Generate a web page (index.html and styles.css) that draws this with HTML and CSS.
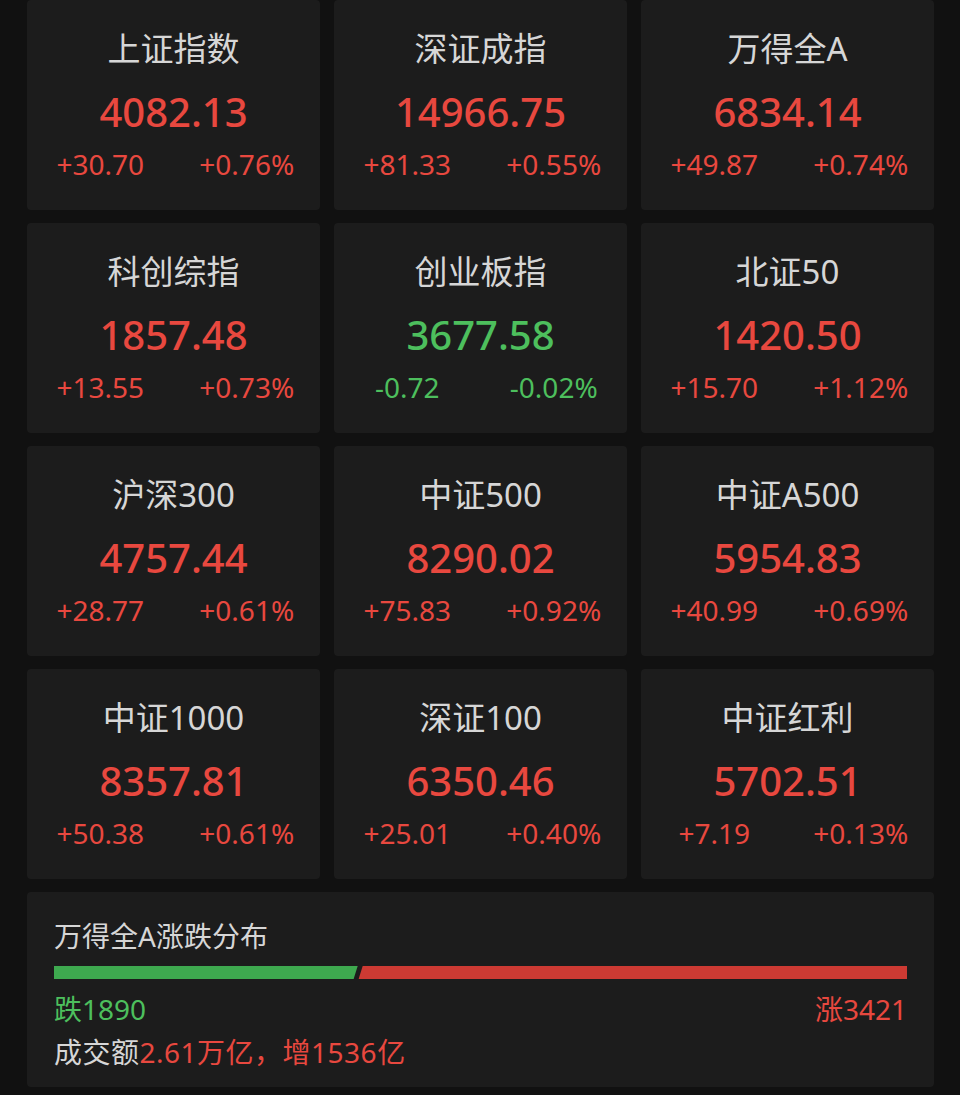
FILE: index.html
```html
<!DOCTYPE html>
<html lang="zh-CN">
<head>
  <meta charset="UTF-8">
  <title>指数行情</title>
  <link rel="stylesheet" href="styles.css">
</head>
<body>

  <div class="page">
    <div class="grid">
      <div class="card">
        <div class="name">上证指数</div>
        <div class="price up">4082.13</div>
        <div class="changes up"><span>+30.70</span><span>+0.76%</span></div>
      </div>
      <div class="card">
        <div class="name">深证成指</div>
        <div class="price up">14966.75</div>
        <div class="changes up"><span>+81.33</span><span>+0.55%</span></div>
      </div>
      <div class="card">
        <div class="name">万得全A</div>
        <div class="price up">6834.14</div>
        <div class="changes up"><span>+49.87</span><span>+0.74%</span></div>
      </div>

      <div class="card">
        <div class="name">科创综指</div>
        <div class="price up">1857.48</div>
        <div class="changes up"><span>+13.55</span><span>+0.73%</span></div>
      </div>
      <div class="card">
        <div class="name">创业板指</div>
        <div class="price down">3677.58</div>
        <div class="changes down"><span>-0.72</span><span>-0.02%</span></div>
      </div>
      <div class="card">
        <div class="name">北证50</div>
        <div class="price up">1420.50</div>
        <div class="changes up"><span>+15.70</span><span>+1.12%</span></div>
      </div>

      <div class="card">
        <div class="name">沪深300</div>
        <div class="price up">4757.44</div>
        <div class="changes up"><span>+28.77</span><span>+0.61%</span></div>
      </div>
      <div class="card">
        <div class="name">中证500</div>
        <div class="price up">8290.02</div>
        <div class="changes up"><span>+75.83</span><span>+0.92%</span></div>
      </div>
      <div class="card">
        <div class="name">中证A500</div>
        <div class="price up">5954.83</div>
        <div class="changes up"><span>+40.99</span><span>+0.69%</span></div>
      </div>

      <div class="card">
        <div class="name">中证1000</div>
        <div class="price up">8357.81</div>
        <div class="changes up"><span>+50.38</span><span>+0.61%</span></div>
      </div>
      <div class="card">
        <div class="name">深证100</div>
        <div class="price up">6350.46</div>
        <div class="changes up"><span>+25.01</span><span>+0.40%</span></div>
      </div>
      <div class="card">
        <div class="name">中证红利</div>
        <div class="price up">5702.51</div>
        <div class="changes up"><span>+7.19</span><span>+0.13%</span></div>
      </div>
    </div>

    <div class="dist">
      <div class="dist-title">万得全A涨跌分布</div>
      <div class="bar">
        <div class="bar-down" style="width: 35.6%"></div>
        <div class="bar-up"></div>
      </div>
      <div class="counts">
        <span class="down">跌1890</span>
        <span class="up">涨3421</span>
      </div>
      <div class="turnover">成交额<span class="up">2.61万亿，增1536亿</span></div>
    </div>
  </div>

</body>
</html>
```

FILE: styles.css
```css
* {
  margin: 0;
  padding: 0;
  box-sizing: border-box;
}

body {
  background: #111111;
  font-family: "Noto Sans", "Noto Sans CJK SC", sans-serif;
  color: #d8d8d8;
}

.page {
  width: 960px;
  padding: 0 26px 0 27px;
}

.grid {
  display: grid;
  grid-template-columns: repeat(3, 293px);
  column-gap: 14px;
  row-gap: 13px;
}

.card {
  background: #1c1c1c;
  border-radius: 4px;
  height: 210px;
  padding-top: 27px;
  text-align: center;
}

.name {
  font-size: 33px;
  line-height: 44px;
  color: #d6d6d6;
}

.price {
  margin-top: 16px;
  font-size: 40px;
  font-weight: 500;
  line-height: 50px;
}

.changes {
  display: flex;
  margin-top: 9px;
  font-size: 28px;
  line-height: 36px;
}

.changes span {
  flex: 1;
  text-align: center;
}

.up {
  color: #e8483f;
}

.down {
  color: #4dbf5d;
}

.dist {
  margin-top: 13px;
  background: #1c1c1c;
  border-radius: 4px;
  height: 195px;
  padding: 24px 27px 0;
}

.dist-title {
  font-size: 28px;
  line-height: 40px;
  color: #d6d6d6;
}

.bar {
  display: flex;
  height: 13px;
  margin-top: 10px;
}

.bar-down {
  background: #3ea94f;
  clip-path: polygon(0 0, 100% 0, calc(100% - 4px) 100%, 0 100%);
}

.bar-up {
  flex: 1;
  margin-left: -1px;
  background: #cd3a33;
  clip-path: polygon(6px 0, 100% 0, 100% 100%, 2px 100%);
}

.counts {
  display: flex;
  justify-content: space-between;
  margin-top: 10px;
  font-size: 28px;
  line-height: 40px;
}

.turnover {
  margin-top: 3px;
  font-size: 28px;
  line-height: 40px;
  letter-spacing: 0.5px;
  color: #d6d6d6;
}
```
